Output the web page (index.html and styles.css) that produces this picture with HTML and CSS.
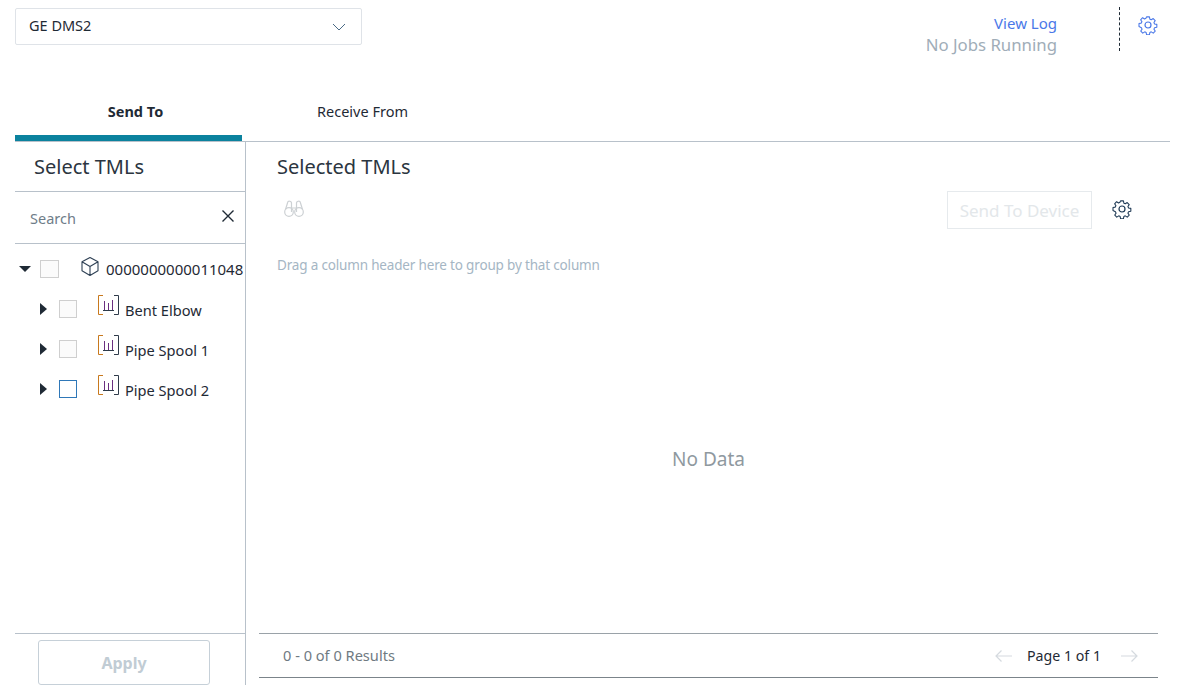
FILE: index.html
```html
<!DOCTYPE html>
<html lang="en">
<head>
<meta charset="utf-8">
<title>Send To</title>
<link rel="stylesheet" href="styles.css">
</head>
<body>
<svg width="0" height="0" class="defs">
  <defs>
    <symbol id="gear" viewBox="0 0 20 20">
      <path fill="none" stroke="currentColor" stroke-width="1.2" stroke-linejoin="round" d="M8.400 1h3.200l.5 2.500 1.500.7 2.200-1.400 2.200 2.300-1.400 2.100.7 1.600 2.500.5v3.200l-2.500.5-.7 1.600 1.400 2.100-2.200 2.300-2.200-1.400-1.500.7-.5 2.500H8.400l-.5-2.500-1.500-.7-2.200 1.400-2.200-2.300 1.400-2.100-.7-1.600L0 11.600V8.400l2.500-.5.7-1.600-1.400-2.100L4 1.900l2.200 1.400 1.500-.7z" transform="translate(1 1) scale(.9)"/>
      <circle cx="10" cy="10" r="3" fill="none" stroke="currentColor" stroke-width="1.2"/>
    </symbol>
    <symbol id="chart" viewBox="0 0 21 20">
      <path fill="none" stroke="#c8791e" stroke-width="1" d="M5 .5H.5v19H5"/>
      <path fill="none" stroke="#2f3b4a" stroke-width="1" d="M16 .5h4.500v19H16"/>
      <path fill="none" stroke="#6b2f80" stroke-width="1" d="M6.500 6v9M10.500 8v7M14.500 5v10"/>
      <path fill="none" stroke="#2f3b4a" stroke-width="1" d="M5 15.500h11"/>
    </symbol>
  </defs>
</svg>
<div class="page">
  <header class="top">
    <div class="select">
      <span class="select-text">GE DMS2</span>
      <svg class="chev" width="14" height="8" viewBox="0 0 14 8"><path d="M1 1l6 6 6-6" fill="none" stroke="#4a6a85" stroke-width="1"/></svg>
    </div>
    <div class="jobs">
      <a class="log">View Log</a>
      <span class="status">No Jobs Running</span>
    </div>
    <div class="settings">
      <svg class="gear-top" width="20" height="20"><use href="#gear"/></svg>
    </div>
  </header>
  <nav class="tabs">
    <div class="tab active">Send To</div>
    <div class="tab">Receive From</div>
  </nav>
  <main class="body">
    <aside class="left">
      <h2 class="left-title">Select TMLs</h2>
      <div class="search">
        <span>Search</span>
        <svg class="clear" width="14" height="14" viewBox="0 0 14 14"><path d="M1.500 1.500l11 11M12.500 1.500l-11 11" stroke="#1f2a35" stroke-width="1.400" fill="none"/></svg>
      </div>
      <ul class="tree">
        <li class="node root">
          <i class="arrow-down"></i><i class="check"></i>
          <svg class="cube" width="20" height="21" viewBox="0 0 20 21"><path d="M10 1.500l8 4.300v9L10 19.500l-8-4.700v-9zM2 5.800l8 4.700 8-4.700M10 10.500v9" fill="none" stroke="#2f4155" stroke-width="1.100" stroke-linejoin="round"/></svg>
          <span class="label">0000000000011048</span>
        </li>
        <li class="node child">
          <i class="arrow-right"></i><i class="check"></i>
          <svg class="chart" width="21" height="20"><use href="#chart"/></svg>
          <span class="label">Bent Elbow</span>
        </li>
        <li class="node child">
          <i class="arrow-right"></i><i class="check"></i>
          <svg class="chart" width="21" height="20"><use href="#chart"/></svg>
          <span class="label">Pipe Spool 1</span>
        </li>
        <li class="node child">
          <i class="arrow-right"></i><i class="check focus"></i>
          <svg class="chart" width="21" height="20"><use href="#chart"/></svg>
          <span class="label">Pipe Spool 2</span>
        </li>
      </ul>
      <div class="apply-row"><button class="apply" type="button">Apply</button></div>
    </aside>
    <section class="right">
      <h2 class="right-title">Selected TMLs</h2>
      <div class="toolbar">
        <svg class="binoc" width="22" height="18" viewBox="0 0 22 18"><g fill="none" stroke="#cdd1d4" stroke-width="1.200"><circle cx="6" cy="12" r="4.300"/><circle cx="16" cy="12" r="4.300"/><path d="M2.500 9.500L4.500 3a2 2 0 0 1 4 .5V12M19.500 9.500L17.500 3a2 2 0 0 0-4 .5V12M8.500 8h5"/></g></svg>
        <button class="send" type="button">Send To Device</button>
        <svg class="gear-dark" width="20" height="20"><use href="#gear"/></svg>
      </div>
      <p class="group">Drag a column header here to group by that column</p>
      <div class="empty">No Data</div>
      <footer class="pager">
        <span class="count">0 - 0 of 0 Results</span>
        <div class="pages">
          <svg width="18" height="12" viewBox="0 0 18 12"><path d="M17 6H1M6.500 .5L1 6l5.500 5.500" fill="none" stroke="#d5dadf" stroke-width="1.200"/></svg>
          <span class="page-label">Page 1 of 1</span>
          <svg width="18" height="12" viewBox="0 0 18 12"><path d="M1 6h16M11.500 .5L17 6l-5.500 5.500" fill="none" stroke="#d5dadf" stroke-width="1.200"/></svg>
        </div>
      </footer>
    </section>
  </main>
</div>
</body>
</html>
```
FILE: styles.css
```css
* { box-sizing: border-box; }
html, body { margin: 0; padding: 0; background: #fff; }
body { font-family: "Noto Sans", "Open Sans", sans-serif; color: #1f2a35; overflow: hidden; }
.defs { display: block; height: 0; }
.page { width: 1184px; height: 700px; padding: 0 14px 0 15px; display: flex; flex-direction: column; }

.top { height: 90px; flex: none; display: flex; align-items: flex-start; }
.select { width: 347px; height: 37px; margin-top: 8px; border: 1px solid #dfe3e8; border-radius: 2px; display: flex; align-items: center; justify-content: space-between; padding: 0 15px 0 13px; font-size: 14.5px; }
.select-text { margin-top: -3px; }
.jobs { margin-left: auto; width: 260px; padding-top: 13px; display: flex; flex-direction: column; align-items: flex-end; }
.log { font-size: 15px; line-height: 21px; color: #4a78e8; }
.status { font-size: 16.8px; line-height: 21px; color: #a0adb8; }
.settings { flex: none; width: 51px; height: 44px; margin-top: 7px; margin-left: 62px; padding-left: 18px; padding-top: 8px; border-left: 1px dashed #1f2a35; }
.gear-top { color: #4a78e8; display: block; }

.tabs { height: 52px; flex: none; display: flex; border-bottom: 1px solid #b8c1ca; }
.tab { width: 227px; height: 51px; text-align: center; font-size: 14.5px; line-height: 42px; padding-left: 14px; }
.tab.active { font-weight: 700; border-bottom: 6px solid #0b829e; }

.body { flex: 1; display: flex; min-height: 0; padding-bottom: 15px; }
.left { width: 231px; flex: none; border-right: 1px solid #b8c1ca; display: flex; flex-direction: column; }
.left-title, .right-title { margin: 0; font-weight: 400; font-size: 20px; line-height: 27px; color: #2b3540; }
.left-title { height: 50px; padding: 11px 0 0 19px; border-bottom: 1px solid #b8c1ca; }
.search { height: 52px; border-bottom: 1px solid #b8c1ca; display: flex; align-items: center; justify-content: space-between; padding: 0 10px 0 15px; font-size: 14.5px; color: #6f7d89; }
.clear { margin-top: -4px; }
.tree { list-style: none; margin: 0; padding: 5px 0 0; flex: 1; overflow: hidden; }
.node { height: 40px; display: flex; align-items: center; font-size: 15px; white-space: nowrap; }
.root { padding-left: 4px; }
.child { padding-left: 25px; font-size: 14.6px; }
.child .label { margin-top: 2px; }
.arrow-down { width: 0; height: 0; border: 6px solid transparent; border-top: 6px solid #1f2a35; border-bottom: 0; margin-right: 9px; }
.arrow-right { width: 0; height: 0; border: 6px solid transparent; border-left: 7px solid #1f2a35; border-right: 0; margin-right: 12px; }
.check { width: 18px; height: 18px; border: 1px solid #cfcfcf; background: #fbfbfb; flex: none; }
.root .check { width: 19px; height: 18px; }
.check.focus { border-color: #2f78b8; background: #fff; }
.cube { margin-left: 21px; margin-top: -5px; flex: none; }
.chart { margin-left: 21px; margin-top: -8px; flex: none; }
.label { margin-left: 6px; }
.apply-row { height: 52px; flex: none; border-top: 1px solid #b8c1ca; padding: 6px 0 0 23px; }
.apply { width: 172px; height: 45px; background: #fff; border: 1px solid #c6d0d8; border-radius: 3px; font: 700 16px "Noto Sans", sans-serif; color: #c1ccd4; padding: 0; }

.right { flex: 1; display: flex; flex-direction: column; min-width: 0; padding: 0 0 7px 13px; margin-right: 12px; }
.right-title { padding: 11px 0 0 18px; height: 49px; flex: none; }
.toolbar { height: 38px; flex: none; display: flex; align-items: center; padding-left: 24px; }
.binoc { margin-top: -2px; }
.send { margin-left: auto; width: 145px; height: 38px; background: #fff; border: 1px solid #e6eaed; font: 400 17px "Noto Sans", sans-serif; color: #e3e7ea; padding: 0; }
.gear-dark { color: #1f3a55; margin: -2px 26px 0 20px; }
.group { margin: 26px 0 0 18px; font-size: 13.5px; letter-spacing: -0.17px; line-height: 20px; color: #a5b6c4; flex: none; }
.empty { flex: 1; display: flex; align-items: center; justify-content: center; font-size: 19px; color: #8f999f; padding-top: 9px; }
.pager { height: 45px; flex: none; border-top: 1px solid #9aa2a8; border-bottom: 1px solid #7b848a; display: flex; align-items: center; justify-content: space-between; padding: 0 20px 0 24px; font-size: 14.6px; }
.count { color: #6f7a82; margin-top: -2px; }
.pages { display: flex; align-items: center; }
.page-label { color: #1f2a35; font-size: 14.2px; margin: 0 19px 0 14px; }
```
